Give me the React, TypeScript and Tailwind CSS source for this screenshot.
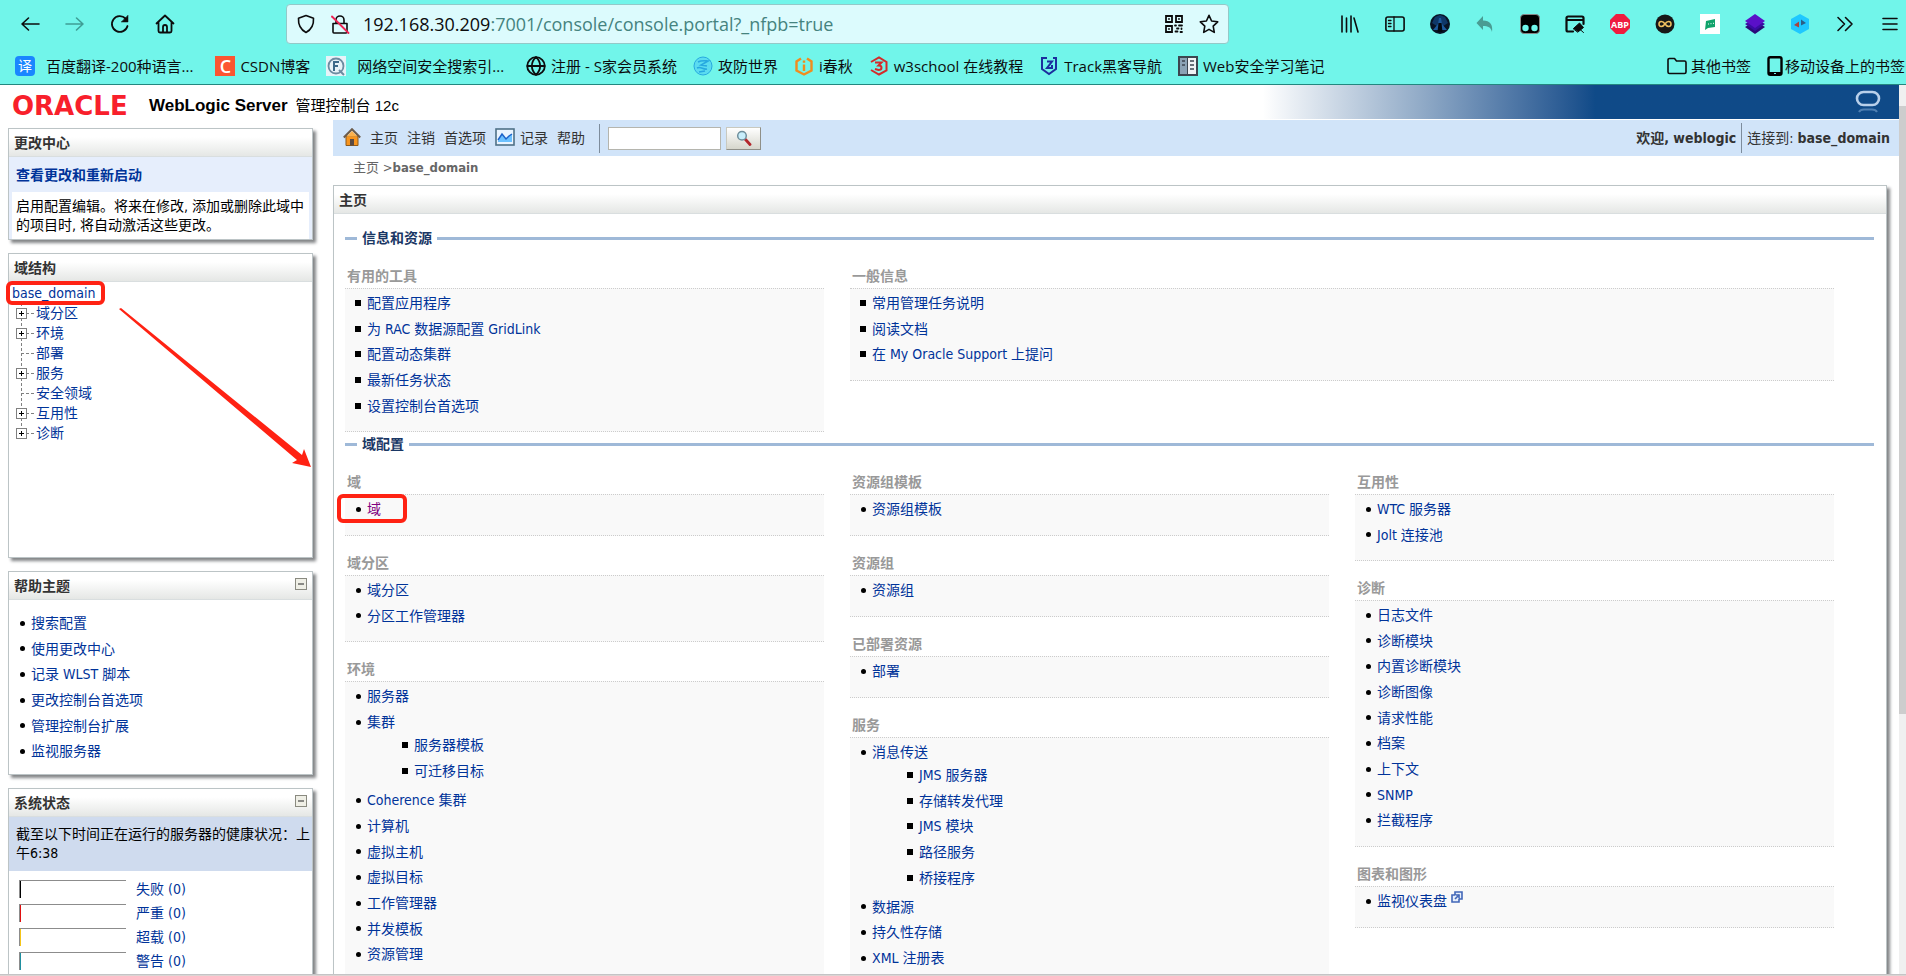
import type { ReactNode } from "react";

type Item = { label: string; visited?: boolean; external?: boolean; children?: string[] };
type Section = { title: string; items: Item[] };

const FONT_CHROME = "font-['Open_Sans','Noto_Sans_CJK_SC',sans-serif]";
const FONT_CONSOLE = "font-['DejaVu_Sans_Condensed','Noto_Sans_CJK_SC',sans-serif]";

const toItems = (...labels: string[]): Item[] => labels.map((label) => ({ label }));

const TOOLS: Section = {
  title: "有用的工具",
  items: toItems("配置应用程序", "为 RAC 数据源配置 GridLink", "配置动态集群", "最新任务状态", "设置控制台首选项"),
};

const GENERAL: Section = {
  title: "一般信息",
  items: toItems("常用管理任务说明", "阅读文档", "在 My Oracle Support 上提问"),
};

const DOMAIN_COLUMNS: Section[][] = [
  [
    { title: "域", items: [{ label: "域", visited: true }] },
    { title: "域分区", items: toItems("域分区", "分区工作管理器") },
    {
      title: "环境",
      items: [
        { label: "服务器" },
        { label: "集群", children: ["服务器模板", "可迁移目标"] },
        ...toItems("Coherence 集群", "计算机", "虚拟主机", "虚拟目标", "工作管理器", "并发模板", "资源管理"),
      ],
    },
  ],
  [
    { title: "资源组模板", items: toItems("资源组模板") },
    { title: "资源组", items: toItems("资源组") },
    { title: "已部署资源", items: toItems("部署") },
    {
      title: "服务",
      items: [
        { label: "消息传送", children: ["JMS 服务器", "存储转发代理", "JMS 模块", "路径服务", "桥接程序"] },
        ...toItems("数据源", "持久性存储", "XML 注册表"),
      ],
    },
  ],
  [
    { title: "互用性", items: toItems("WTC 服务器", "Jolt 连接池") },
    {
      title: "诊断",
      items: toItems("日志文件", "诊断模块", "内置诊断模块", "诊断图像", "请求性能", "档案", "上下文", "SNMP", "拦截程序"),
    },
    { title: "图表和图形", items: [{ label: "监视仪表盘", external: true }] },
  ],
];

const TREE = [
  { label: "域分区", expandable: true },
  { label: "环境", expandable: true },
  { label: "部署", expandable: false },
  { label: "服务", expandable: true },
  { label: "安全领域", expandable: false },
  { label: "互用性", expandable: true },
  { label: "诊断", expandable: true },
];

const HELP_TOPICS = toItems("搜索配置", "使用更改中心", "记录 WLST 脚本", "更改控制台首选项", "管理控制台扩展", "监视服务器");

const HEALTH = [
  { label: "失败 (0)", bar: "bg-black" },
  { label: "严重 (0)", bar: "bg-[#e01010]" },
  { label: "超载 (0)", bar: "bg-[#f5c518]" },
  { label: "警告 (0)", bar: "bg-[#1f8fa0]" },
];

/* ---------- browser icons ---------- */

function Line({ children, className = "size-5", width = 1.6 }: { children: ReactNode; className?: string; width?: number }) {
  return (
    <svg
      viewBox="0 0 20 20"
      className={`shrink-0 ${className}`}
      fill="none"
      stroke="currentColor"
      strokeWidth={width}
      strokeLinecap="round"
      strokeLinejoin="round"
    >
      {children}
    </svg>
  );
}

const BackIcon = () => (
  <Line>
    <path d="M19 10H2M8.500 4L2 10l6.500 6" />
  </Line>
);

const ForwardIcon = () => (
  <Line>
    <path d="M1 10h17M11.500 4L18 10l-6.500 6" />
  </Line>
);

const ReloadIcon = () => (
  <Line width={1.8}>
    <path d="M17.500 12A7.900 7.900 0 1 1 15.500 4.500" />
    <path d="M18 1.500v6.500h-6.500z" fill="currentColor" strokeWidth="0.500" />
  </Line>
);

const HomeIcon = () => (
  <Line width={1.8}>
    <path d="M1.500 9.500L10 1.500l8.500 8M3.500 8.500V17a1.500 1.500 0 0 0 1.500 1.500h10a1.500 1.500 0 0 0 1.500-1.500V8.500" />
    <path d="M8 18v-5a2 2 0 0 1 4 0v5" />
  </Line>
);

const ShieldIcon = () => (
  <Line>
    <path d="M10 1.500l7.500 2.800c.4 6.500-1.800 11.200-7.500 14.200C4.300 15.500 2.100 10.800 2.500 4.300z" />
  </Line>
);

const LockOffIcon = () => (
  <Line>
    <path d="M3 9.500h14V18a1 1 0 0 1-1 1H4a1 1 0 0 1-1-1zM6 9.500V6a4 4 0 0 1 8 0v3.500" />
    <path d="M2 2.500L18.500 19" stroke="#ef2353" strokeWidth="1.800" />
  </Line>
);

const QrIcon = () => (
  <Line width={1.8} className="size-5">
    <path d="M2 2h6v6H2zM12 2h6v6h-6zM2 12h6v6H2z" strokeLinejoin="miter" />
    <path d="M5 5h.01M15 5h.01M5 15h.01M11 11.500h1M15 11.500h3M13 14.500h1.500M11.500 17.500h2M17.500 14.500v.5M16.500 18h1.500" />
  </Line>
);

const StarIcon = () => (
  <Line>
    <path d="M10 1.300l2.600 5.700 6.100.8-4.500 4.300 1.100 6.300L10 15.400l-5.300 3 1.100-6.300L1.300 7.800 7.400 7z" />
  </Line>
);

const EXTENSIONS: { name: string; icon: ReactNode }[] = [
  {
    name: "书签库",
    icon: (
      <Line>
        <path d="M2 2v16M6.500 4v14M11 2v16M14 4l4 14" />
      </Line>
    ),
  },
  {
    name: "侧栏",
    icon: (
      <Line>
        <rect x="0.900" y="3" width="18.200" height="14" rx="2" />
        <path d="M9 3v14M3.500 6.500h2.500M3.500 9.500h2.500M3.500 12.500h2.500" strokeWidth="1.300" />
      </Line>
    ),
  },
  {
    name: "夜空",
    icon: (
      <svg viewBox="0 0 20 20" className="size-5">
        <circle cx="10" cy="10" r="10" fill="#081426" />
        <path d="M2 9l3-6 5-2 5 2 3 6-8 5z" fill="#0f3768" />
        <path d="M9 4h2l1 6 5 6H3l5-6z" fill="#1d5a9c" />
        <path d="M8.500 9h3l1 9h-5z" fill="#03080f" />
      </svg>
    ),
  },
  {
    name: "撤销",
    icon: (
      <svg viewBox="0 0 20 20" className="size-5">
        <path d="M8 2v4.500c7 0 10 4 9 11.500-1-4.500-4-6-9-6v4L1.500 9z" fill="#4a9c93" />
      </svg>
    ),
  },
  {
    name: "双圆",
    icon: (
      <svg viewBox="0 0 20 20" className="size-5">
        <rect x="0.500" y="0.500" width="19" height="19" rx="3.500" fill="#000" stroke="#888" />
        <circle cx="5.500" cy="14" r="3.200" fill="#71f5ea" />
        <circle cx="14.500" cy="14" r="3.200" fill="#71f5ea" />
      </svg>
    ),
  },
  {
    name: "编辑窗口",
    icon: (
      <Line width={2.200}>
        <path d="M8 17.500H3A1.500 1.500 0 0 1 1.500 16V4A1.500 1.500 0 0 1 3 2.500h14A1.500 1.500 0 0 1 18.500 4v6M1.500 6h17" />
        <path d="M8.500 14.500l6-5.500 4 4.500-5.500 4.500zM14.500 15l4 3.500" fill="currentColor" strokeWidth="1" />
      </Line>
    ),
  },
  {
    name: "广告拦截",
    icon: (
      <svg viewBox="0 0 20 20" className="size-5">
        <path d="M6 0h8l6 6v8l-6 6H6l-6-6V6z" fill="#ef1c3f" />
        <text x="10" y="13.500" fontSize="9" fontWeight="700" textAnchor="middle" fill="#fff">
          ABP
        </text>
      </svg>
    ),
  },
  {
    name: "无限",
    icon: (
      <svg viewBox="0 0 20 20" className="size-5">
        <circle cx="10" cy="10" r="9.500" fill="#171717" />
        <path
          d="M10 10C8 7 4 6.500 4 10s4 3 6 0 6-3.500 6 0-4 3-6 0z"
          fill="none"
          stroke="#f0c060"
          strokeWidth="1.600"
        />
      </svg>
    ),
  },
  {
    name: "消息",
    icon: (
      <svg viewBox="0 0 20 20" className="size-5">
        <path d="M0 0h20v20H0z" fill="#fff" />
        <path d="M6 7l9-2v8l-7 1-3 2z" fill="#10a36b" />
        <path d="M8 10h1M10.500 9.700h1M13 9.300h1" stroke="#fff" />
      </svg>
    ),
  },
  {
    name: "图层",
    icon: (
      <svg viewBox="0 0 20 20" className="size-5">
        <path d="M0 13l10-6 10 6-10 7z" fill="#2a0a78" />
        <path d="M0 10l10-6 10 6-10 7z" fill="#3a0ca3" />
        <path d="M0 7l10-7 10 7-10 7z" fill="#5a10c8" />
      </svg>
    ),
  },
  {
    name: "代理",
    icon: (
      <svg viewBox="0 0 20 20" className="size-5">
        <path d="M10 0l9 5v10l-9 5-9-5V5z" fill="#1fc8ff" />
        <path d="M4 11l5-3.500v6z" fill="#a8443f" />
        <path d="M16 9l-5-3.500v6z" fill="#2d5f86" />
      </svg>
    ),
  },
  {
    name: "更多工具",
    icon: (
      <Line>
        <path d="M3 3.500l6.500 6.500L3 16.500M10.500 3.500L17 10l-6.500 6.500" />
      </Line>
    ),
  },
  {
    name: "菜单",
    icon: (
      <Line>
        <path d="M3 4.500h14M3 10h14M3 15.500h14" />
      </Line>
    ),
  },
];

const BOOKMARKS: { label: string; wide?: boolean; icon: ReactNode }[] = [
  {
    label: "百度翻译-200种语言...",
    wide: true,
    icon: (
      <span className="flex size-5 items-center justify-center rounded bg-[#1a86ff] text-sm leading-5 text-white">译</span>
    ),
  },
  {
    label: "CSDN博客",
    icon: (
      <span className="flex size-5 items-center justify-center bg-[#fc5531] text-lg leading-5 font-semibold text-white">C</span>
    ),
  },
  {
    label: "网络空间安全搜索引...",
    wide: true,
    icon: (
      <svg viewBox="0 0 20 20" className="size-5">
        <path d="M0 0h20v20H0z" fill="#e8f3f8" />
        <circle cx="10" cy="10" r="7.500" fill="none" stroke="#6d8ba0" strokeWidth="1.800" />
        <path d="M8 15V6h5M8 10h4" fill="none" stroke="#3d6a8a" strokeWidth="2" />
        <path d="M13 14l5 5" stroke="#6d8ba0" strokeWidth="2" />
      </svg>
    ),
  },
  {
    label: "注册 - S家会员系统",
    icon: (
      <Line width={1.8}>
        <circle cx="10" cy="10" r="8.800" />
        <path d="M1.500 10h17M10 1.200c-5.500 5-5.500 12.600 0 17.600M10 1.200c5.500 5 5.500 12.600 0 17.600" />
      </Line>
    ),
  },
  {
    label: "攻防世界",
    icon: (
      <svg viewBox="0 0 20 20" className="size-5" fill="none" stroke="#27a9e0">
        <circle cx="10" cy="10" r="9" fill="#5bdcf0" />
        <path d="M5 6c4-2 8-1 10-1l-7 4 6 1M4 12c4-2 6 2 10 1M6 16l6-1" strokeWidth="1.600" />
      </svg>
    ),
  },
  {
    label: "i春秋",
    icon: (
      <svg viewBox="0 0 20 20" className="size-5" fill="none" stroke="#f08c1e" strokeWidth="2.400">
        <path d="M7 2.500L2.500 5.500v9L10 18.500l7.500-4v-9L13 2.500" />
        <path d="M10 8.500V15M10 4.500v2.200" />
      </svg>
    ),
  },
  {
    label: "w3school 在线教程",
    icon: (
      <svg viewBox="0 0 20 20" className="size-5" fill="none" stroke="#d42a2a" strokeWidth="2">
        <path d="M2 6l8-4.500L17.500 6v8.500L10 18.500 2 14" />
        <path d="M6 6.500h6.500L9.500 9.500c4 0 4 4.500 0 4.500L6 13" />
      </svg>
    ),
  },
  {
    label: "Track黑客导航",
    icon: (
      <svg viewBox="0 0 20 20" className="size-5" fill="none" stroke="#1c2f9e" strokeWidth="2">
        <path d="M8 2H3v11l7 5 7-5V2h-3" />
        <path d="M8 5.500h5L8 12h5M13 9v4" />
      </svg>
    ),
  },
  {
    label: "Web安全学习笔记",
    icon: (
      <svg viewBox="0 0 20 20" className="size-5">
        <path d="M0 0h20v20H0z" fill="#3c4650" />
        <path d="M2 2h7v16H2z" fill="#8ba3b5" />
        <path d="M10 2h8v16h-8z" fill="#eef2f4" />
        <path d="M4 5h3M4 9h3M12 5h4M12 9h4M12 13h4" stroke="#3c4650" strokeWidth="1.500" />
      </svg>
    ),
  },
];

function BrowserChrome() {
  return (
    <header className={`shrink-0 border-b border-[#23877f] bg-[#71f5ea] text-[#0c0c0d] ${FONT_CHROME}`}>
      <div className="flex h-12 items-center pr-[6px] pl-5">
        <nav className="flex gap-[25px]">
          <button type="button" aria-label="后退"><BackIcon /></button>
          <button type="button" aria-label="前进" disabled className="text-[#3f9d95]"><ForwardIcon /></button>
          <button type="button" aria-label="刷新"><ReloadIcon /></button>
          <button type="button" aria-label="主页"><HomeIcon /></button>
        </nav>
        <div className="mx-[111px] flex h-10 min-w-0 flex-1 items-center rounded border border-[#93c9c8] bg-[#dcfbfd] pr-[9px] pl-[9px]">
          <ShieldIcon />
          <span className="ml-[14px] flex"><LockOffIcon /></span>
          <p className="ml-[13px] flex-1 truncate text-lg leading-6 text-[#45837f]">
            <span className="text-[#0c0c0d]">192.168.30.209</span>:7001/console/console.portal?_nfpb=true
          </p>
          <button type="button" aria-label="二维码"><QrIcon /></button>
          <button type="button" aria-label="收藏" className="ml-[15px]"><StarIcon /></button>
        </div>
        <div className="flex gap-[25px]">
          {EXTENSIONS.map((ext) => (
            <button key={ext.name} type="button" aria-label={ext.name}>
              {ext.icon}
            </button>
          ))}
        </div>
      </div>
      <div className="flex h-9 items-center pb-px pl-[15px] text-[15px] leading-5 whitespace-nowrap">
        <div className="flex flex-1 gap-4">
          {BOOKMARKS.map((b) => (
            <a key={b.label} href="#" className={b.wide ? "flex items-center gap-[11px] pr-[6px]" : "flex items-center gap-[5px]"}>
              {b.icon}
              {b.label}
            </a>
          ))}
        </div>
        <a href="#" className="flex items-center gap-1 pr-4">
          <Line>
            <path d="M1 16V4a1.500 1.500 0 0 1 1.500-1.500h5l2 2.500h8A1.500 1.500 0 0 1 19 6.500V16a1.500 1.500 0 0 1-1.500 1.500h-15A1.500 1.500 0 0 1 1 16z" />
          </Line>
          其他书签
        </a>
        <a href="#" className="flex items-center gap-[2px] pr-px">
          <svg viewBox="0 0 16 20" className="h-5 w-4">
            <rect x="1.500" y="1.200" width="13" height="17.600" rx="1.800" fill="none" stroke="#000" strokeWidth="2.400" />
            <path d="M1.500 16h13v3h-13z" />
            <path d="M7 17.500h2" stroke="#71f5ea" />
          </svg>
          移动设备上的书签
        </a>
      </div>
    </header>
  );
}

/* ---------- console pieces ---------- */

function Panel({ title, collapsible, className = "", children }: { title: string; collapsible?: boolean; className?: string; children: ReactNode }) {
  return (
    <section className={`border border-[#bcc4c6] bg-white shadow-[3px_3px_3px_0_#848688] ${className}`}>
      <div className="flex h-7 items-center justify-between border-b border-[#d9dedf] bg-linear-to-b from-white from-30% to-[#e5e7e5] pr-[5px] pl-[5px]">
        <h2 className="leading-5 font-bold text-[#333]">{title}</h2>
        {collapsible ? (
          <button type="button" aria-label={`折叠${title}`} className="mb-1">
            <svg viewBox="0 0 12 12" className="size-3">
              <rect x="0.500" y="0.500" width="11" height="11" fill="#efefe6" stroke="#8a8a80" />
              <path d="M3 6h6" stroke="#444" strokeWidth="1.200" />
            </svg>
          </button>
        ) : null}
      </div>
      {children}
    </section>
  );
}

function Bullet({ square }: { square?: boolean }) {
  return (
    <span className="flex w-[6px] shrink-0 justify-center">
      <span className={square ? "size-[6px] bg-black" : "size-[5px] rounded-full bg-black"} />
    </span>
  );
}

function LinkList({ items, square }: { items: Item[]; square?: boolean }) {
  return (
    <ul>
      {items.map((item) =>
        item.children ? (
          <li key={item.label}>
            <div className="flex h-[23px] items-center gap-[6px] pt-[3px]">
              <Bullet square={square} />
              <a href="#" className="leading-5">{item.label}</a>
            </div>
            <div className="pb-1 pl-[47px]">
              <LinkList square items={toItems(...item.children)} />
            </div>
          </li>
        ) : (
          <li key={item.label} className="flex h-[26px] items-center gap-[6px] nth-[3n+2]:h-[25px]">
            <Bullet square={square} />
            <a href="#" className={item.visited ? "leading-5 text-[#800080]" : "flex gap-1 leading-5"}>
              {item.label}
              {item.external ? (
                <svg viewBox="0 0 12 12" className="size-3" fill="#e6eefb" stroke="#4267b8" strokeWidth="1.600">
                  <path d="M4 1h7v7H8V4H4z" />
                  <path d="M4 4H1v7h7V8M4 8l4-4" />
                </svg>
              ) : null}
            </a>
          </li>
        ),
      )}
    </ul>
  );
}

function SectionBox({ section, square, highlighted }: { section: Section; square?: boolean; highlighted?: boolean }) {
  return (
    <section className="relative">
      <h4 className="h-6 pl-[2px] leading-6 font-bold text-[#999]">{section.title}</h4>
      <div className="border-y border-dotted border-[#ccc] bg-[#f9f9f9] pt-px pb-[13px] pl-[10px] text-[#039]">
        <LinkList items={section.items} square={square} />
      </div>
      {highlighted ? (
        <span className="absolute top-6 -left-2 h-[29px] w-[70px] rounded-md border-4 border-[#ff2213]" />
      ) : null}
    </section>
  );
}

function Legend({ children }: { children: ReactNode }) {
  return (
    <div className="flex items-center gap-[5px]">
      <span className="h-[3px] w-3 bg-[#9fb9d8]" />
      <h3 className="leading-5 font-bold text-[#1a3765]">{children}</h3>
      <span className="h-[3px] flex-1 bg-[#9fb9d8]" />
    </div>
  );
}

function TreeNode({ label, expandable, last }: { label: string; expandable: boolean; last: boolean }) {
  return (
    <li className="flex h-5 items-center">
      <svg viewBox="0 0 20 20" className="mr-[1px] ml-[6px] size-5" fill="none" stroke="#808080">
        <path d={last ? "M6.500 0v10" : "M6.500 0v20"} strokeDasharray="3 2" />
        <path d="M6 10.500h14" strokeDasharray="3 2" />
        {expandable ? (
          <>
            <rect x="1.500" y="5.500" width="10" height="10" fill="#fff" />
            <path d="M4 10.500h5M6.500 8v5" stroke="#000" />
          </>
        ) : null}
      </svg>
      <a href="#">{label}</a>
    </li>
  );
}

function Sidebar() {
  return (
    <aside className="relative flex w-[305px] shrink-0 flex-col gap-[13px] pt-2">
      <Panel title="更改中心">
        <div className="bg-[#e6eefc] px-[3px]">
          <h3 className="px-1 pt-[9px] pb-2 leading-[18px] font-bold text-[#039]">查看更改和重新启动</h3>
          <p className="bg-white pt-[5px] pb-1 pl-1 leading-[19px] text-black">
            启用配置编辑。将来在修改, 添加或删除此域中的项目时, 将自动激活这些更改。
          </p>
        </div>
      </Panel>

      <Panel title="域结构" className="h-[305px]">
        <nav className="text-[#039]">
          <a href="#" className="flex h-[21px] w-fit items-center pt-px pl-[3px]">base_domain</a>
          <ul>
            {TREE.map((node, i) => (
              <TreeNode key={node.label} {...node} last={i === TREE.length - 1} />
            ))}
          </ul>
        </nav>
      </Panel>

      <Panel title="帮助主题" collapsible>
        <div className="py-[10px] pl-[10px] text-[#039]">
          <LinkList items={HELP_TOPICS} />
        </div>
      </Panel>

      <Panel title="系统状态" collapsible>
        <p className="bg-[#cfdbee] py-2 pr-px pl-[7px] leading-[19px] text-black">
          截至以下时间正在运行的服务器的健康状况：上午6:38
        </p>
        <ul className="px-[10px] pt-[6px] pb-4 text-[#039]">
          {HEALTH.map((h) => (
            <li key={h.label} className="flex h-6 items-center gap-[10px]">
              <span className="flex h-[18px] w-[107px] border-t border-l border-[#8c8c8c]">
                <span className={`w-px ${h.bar}`} />
              </span>
              <a href="#" className="leading-5">{h.label}</a>
            </li>
          ))}
        </ul>
      </Panel>

      {/* annotations over the domain tree */}
      <span className="absolute top-[161px] -left-[2px] h-6 w-[99px] rounded-md border-4 border-[#ff2213]" />
      <svg viewBox="0 0 194 160" className="absolute top-[188px] left-[110px] h-[160px] w-[194px]" fill="#ff2213">
        <path d="M1 1l2-1L184 147l2-6 7 18-19-4 5-3z" />
      </svg>
    </aside>
  );
}

function ConsoleToolbar() {
  return (
    <div className="flex h-9 items-center bg-[#d1e4f9] text-[#333]">
      <nav className="flex items-center gap-[9px] pl-[10px] leading-5">
        <svg viewBox="0 0 18 18" className="mb-[3px] size-[18px]">
          <path d="M3 8h12v9.500H3z" fill="#f7941d" stroke="#8c5a1c" />
          <path d="M0.800 9.500L9 1.200l8.200 8.300" fill="none" stroke="#6b5b4b" strokeWidth="2" />
          <path d="M3.500 8.500L9 3l5.500 5.500z" fill="#fbb14d" />
          <path d="M7 11h4v6.500H7z" fill="#5a4a42" />
        </svg>
        <a href="#">主页</a>
        <a href="#">注销</a>
        <a href="#">首选项</a>
        <a href="#" className="flex items-center gap-[5px]">
          <svg viewBox="0 0 20 18" className="mb-[3px] h-[18px] w-5">
            <rect x="1" y="1" width="18" height="16" fill="#eaf4ff" stroke="#4f7187" strokeWidth="1.600" />
            <path d="M3 13l4-7 4 5 3-3 3-2v8H3z" fill="#6cc1ff" />
            <path d="M3 12l4-6 4 5 3-3 3-2" fill="none" stroke="#1c62c9" strokeWidth="1.500" />
          </svg>
          记录
        </a>
        <a href="#">帮助</a>
      </nav>
      <form className="ml-[14px] flex h-[29px] items-center gap-[5px] border-l border-[#7d8c9c] pl-2">
        <input aria-label="搜索" className="h-[23px] w-[113px] border border-[#b5b5ae] bg-white px-1" />
        <button
          type="button"
          aria-label="执行搜索"
          className="flex h-[23px] w-[35px] items-center justify-center border border-[#c9c9bf] border-r-[#8f8f88] border-b-[#8f8f88] bg-linear-to-b from-white to-[#d6d6cc]"
        >
          <svg viewBox="0 0 16 16" className="size-4">
            <path d="M9.500 9.500L14 14.500" stroke="#b3262b" strokeWidth="2.800" strokeLinecap="round" />
            <circle cx="6" cy="5.800" r="4.300" fill="#c8eefb" stroke="#6f8f9c" strokeWidth="1.500" />
          </svg>
        </button>
      </form>
      <p className="ml-auto flex items-center leading-[30px]">
        <b className="border-r border-[#7d8c9c] pr-[5px]">欢迎, weblogic</b>
        <span className="pr-[9px] pl-[5px]">
          连接到: <b>base_domain</b>
        </span>
      </p>
    </div>
  );
}

function Masthead() {
  return (
    <div className="flex h-[35px] items-center border-b border-white bg-linear-to-r from-white from-[66.500%] via-[#8fa9c6] via-[75%] to-[#0f4a88] to-[84%] pr-[18px] pl-3 font-['Liberation_Sans','Noto_Sans_CJK_SC',sans-serif]">
      <span className="w-[137px] pt-[7px] font-['DejaVu_Sans',sans-serif] text-[26px] leading-7 font-bold text-[#f8202b]">ORACLE</span>
      <h1 className="flex items-baseline gap-2 pt-[7px] text-[15px] leading-7 text-black">
        <b className="text-[17px]">WebLogic Server</b>
        <span>管理控制台 12c</span>
      </h1>
      <svg viewBox="0 0 26 26" className="ml-auto h-[26px] w-[26px]" fill="none">
        <rect x="2" y="3" width="22" height="13" rx="6.500" stroke="#b9d0ea" strokeWidth="2.600" />
        <path d="M4 23c1-2 3-2.500 5-2.500h8c2 0 4 .5 5 2.500" stroke="#4f7fb2" strokeWidth="2" />
      </svg>
    </div>
  );
}

export default function App() {
  return (
    <div className="flex h-screen flex-col overflow-hidden bg-white">
      <BrowserChrome />

      <div className="flex min-h-0 flex-1">
        <div className={`min-w-0 flex-1 overflow-hidden text-sm leading-5 ${FONT_CONSOLE}`}>
          <Masthead />
          <div className="flex gap-5 pl-2">
            <Sidebar />
            <main className="min-w-0 flex-1">
              <ConsoleToolbar />
              <p className="h-[29px] pl-5 text-[13px] leading-6 text-[#666]">
                <a href="#">主页</a> &gt;<b>base_domain</b>
              </p>
              <Panel title="主页" className="mr-3">
                <div className="flex flex-col gap-[2px] pt-[14px] pr-3 pb-10 pl-[11px]">
                  <div>
                    <Legend>信息和资源</Legend>
                    <div className="mt-4 mr-10 grid grid-cols-3 items-start gap-[26px]">
                      <SectionBox section={TOOLS} square />
                      <div className="col-span-2">
                        <SectionBox section={GENERAL} square />
                      </div>
                    </div>
                  </div>
                  <div>
                    <Legend>域配置</Legend>
                    <div className="mt-4 mr-10 grid grid-cols-3 gap-[26px]">
                      {DOMAIN_COLUMNS.map((sections, col) => (
                        <div key={col} className="flex flex-col gap-[15px]">
                          {sections.map((s) => (
                            <SectionBox key={s.title} section={s} highlighted={s.title === "域"} />
                          ))}
                        </div>
                      ))}
                    </div>
                  </div>
                </div>
              </Panel>
            </main>
          </div>
        </div>

        {/* page scrollbar */}
        <div className="flex w-[7px] shrink-0 flex-col bg-[#f0f0f0] pt-[21px]">
          <div className="h-[70%] bg-[#cdcdcd]" />
        </div>
      </div>

      <div className="h-[2px] shrink-0 border-t border-[#c4c4c6] bg-[#dcd4d3]" />
    </div>
  );
}
